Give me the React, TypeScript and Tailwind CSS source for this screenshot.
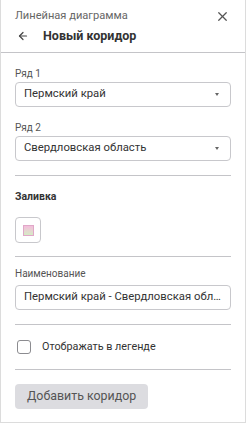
import { X, ArrowLeft } from "lucide-react"

function Label({ children }: { children: React.ReactNode }) {
  return <div className="text-[10px] leading-[12px] text-[#555]">{children}</div>
}

function Select({ value }: { value: string }) {
  return (
    <div className="mt-[2px] h-[25px] flex items-center justify-between rounded-[4px] border border-[#c8c8cc] pl-[8px] pr-[11px] text-[11.3px] text-[#333]">
      <span>{value}</span>
      <span className="w-0 h-0 border-l-[2.5px] border-r-[2.5px] border-t-[3px] border-l-transparent border-r-transparent border-t-[#666]" />
    </div>
  )
}

function Divider() {
  return <div className="h-px bg-[#c4c4c8]" />
}

export default function App() {
  return (
    <div
      className="w-[246px] h-[423px] bg-white border-x border-b border-[#dcdcdc] flex flex-col"
      style={{ fontFamily: "Roboto, 'Noto Sans', sans-serif" }}
    >
      {/* header */}
      <div className="border-b border-[#c4c4c8] px-[14px] pt-[9px] h-[53px]">
        <div className="flex items-center justify-between h-[14px]">
          <span className="text-[11.1px] text-[#666]">Линейная диаграмма</span>
          <X className="w-[15px] h-[15px] text-[#555] mr-[1px]" strokeWidth={2} />
        </div>
        <div className="flex items-center mt-[6px] h-[14px]">
          <ArrowLeft className="w-[12px] h-[12px] text-[#444] ml-[2px]" strokeWidth={2.4} />
          <span className="ml-[14px] text-[12.5px] font-bold text-[#333]">Новый коридор</span>
        </div>
      </div>

      <div className="px-[14px]">
        <div className="pt-[15px]">
          <Label>Ряд 1</Label>
          <Select value="Пермский край" />
        </div>
        <div className="pt-[15px]">
          <Label>Ряд 2</Label>
          <Select value="Свердловская область" />
        </div>
        <div className="pt-[14px]">
          <Divider />
        </div>

        <div className="pt-[14px] text-[10.5px] leading-[13px] font-bold text-[#333]">Заливка</div>
        <div className="mt-[14px] w-[26px] h-[26px] rounded-[4px] border border-[#c8c8cc] flex items-center justify-center">
          <div className="w-[11px] h-[11px] border border-[#e0a8c8] bg-gradient-to-b from-[#f4bcdc] to-[#d4ecc4]" />
        </div>
        <div className="pt-[13px]">
          <Divider />
        </div>

        <div className="pt-[11px]">
          <Label>Наименование</Label>
          <div className="mt-[5px] h-[25px] flex items-center rounded-[4px] border border-[#c8c8cc] pl-[8px] pr-[4px] text-[11.3px] text-[#333]">
            <span className="truncate">Пермский край - Свердловская область</span>
          </div>
        </div>
        <div className="pt-[14px]">
          <Divider />
        </div>

        <div className="flex items-center h-[44px]">
          <div className="ml-[2px] w-[14px] h-[14px] rounded-[3px] border border-[#8c8c90]" />
          <span className="ml-[11px] text-[10.8px] text-[#333]">Отображать в легенде</span>
        </div>
        <Divider />

        <div className="pt-[13px]">
          <button className="h-[25px] px-[12px] rounded-[4px] bg-[#dcdce0] text-[12.4px] text-[#555]">
            Добавить коридор
          </button>
        </div>
      </div>
    </div>
  )
}
